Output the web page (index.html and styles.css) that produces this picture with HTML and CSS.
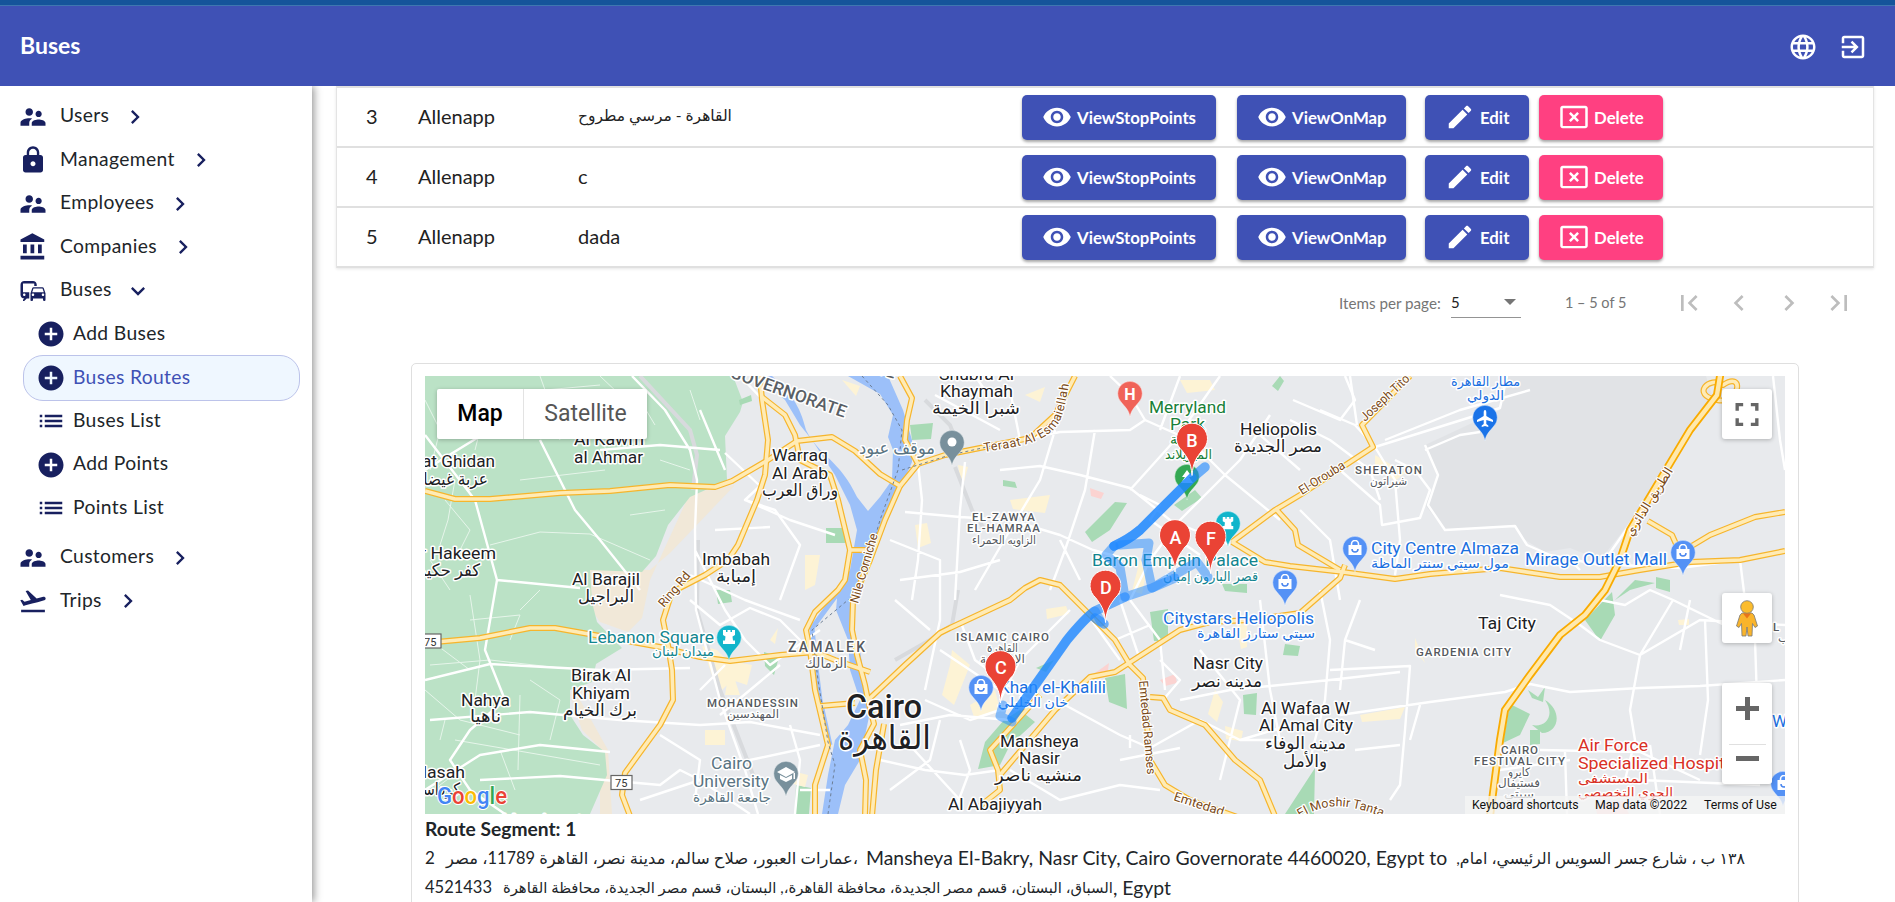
FILE: index.html
```html
<!DOCTYPE html>
<html lang="en">
<head>
<meta charset="utf-8">
<title>Buses</title>
<link rel="stylesheet" href="styles.css">
</head>
<body>
<svg class="sprite" aria-hidden="true">
  <symbol id="i-people" viewBox="0 0 24 24"><path d="M16.5 12c1.38 0 2.49-1.12 2.49-2.5S17.88 7 16.5 7C15.12 7 14 8.12 14 9.5s1.12 2.5 2.5 2.5zM9 11c1.66 0 2.99-1.34 2.99-3S10.66 5 9 5C7.34 5 6 6.34 6 8s1.34 3 3 3zm7.5 3c-1.83 0-5.5.92-5.5 2.75V19h11v-2.25c0-1.83-3.67-2.75-5.5-2.75zM9 13c-2.33 0-7 1.17-7 3.5V19h7v-2.25c0-.85.33-2.34 2.37-3.47C10.5 13.1 9.66 13 9 13z"/></symbol>
  <symbol id="i-lock" viewBox="0 0 24 24"><path d="M18 8h-1V6c0-2.76-2.24-5-5-5S7 3.24 7 6v2H6c-1.1 0-2 .9-2 2v10c0 1.1.9 2 2 2h12c1.1 0 2-.9 2-2V10c0-1.1-.9-2-2-2zm-6 9c-1.1 0-2-.9-2-2s.9-2 2-2 2 .9 2 2-.9 2-2 2zm3.1-9H8.9V6c0-1.71 1.39-3.1 3.1-3.1 1.71 0 3.1 1.39 3.1 3.1v2z"/></symbol>
  <symbol id="i-bank" viewBox="0 0 24 24"><path d="M4 10v7h3v-7H4zm6 0v7h3v-7h-3zM2 22h19v-3H2v3zm14-12v7h3v-7h-3zm-4.500-9L2 6v2h19V6l-9.500-5z"/></symbol>
  <symbol id="i-commute" viewBox="0 0 24 24"><path d="M12 4H5C3.34 4 2 5.34 2 7v8c0 1.66 1.34 3 3 3l-1 1v1h1l2-2.030L9 18v-5H4V5.980L13 6v2h2V7c0-1.660-1.340-3-3-3zM5 14c.55 0 1 .45 1 1s-.45 1-1 1-1-.45-1-1 .45-1 1-1zm15.570-4.340c-.14-.4-.52-.66-.97-.66h-7.190c-.46 0-.83.26-.98.66L10 13.770l.01 5.510c0 .38.31.72.69.72h.62c.38 0 .68-.38.68-.76V18h8v1.240c0 .38.31.76.69.76h.61c.38 0 .69-.34.69-.72l.01-1.370v-4.140l-1.430-4.110zm-8.160.34h7.190l1.030 3h-9.250l1.030-3zM12 16c-.55 0-1-.45-1-1s.45-1 1-1 1 .45 1 1-.45 1-1 1zm8 0c-.55 0-1-.45-1-1s.45-1 1-1 1 .45 1 1-.45 1-1 1z"/></symbol>
  <symbol id="i-takeoff" viewBox="0 0 24 24"><path d="M2.500 19h19v2h-19v-2zm19.570-9.360c-.21-.8-1.040-1.280-1.840-1.060L14.920 10l-6.900-6.430-1.930.51 4.140 7.170-4.970 1.330-1.970-1.540-1.450.39 1.820 3.160.77 1.330 1.600-.43 5.310-1.420 4.350-1.160L21 11.490c.81-.23 1.280-1.050 1.070-1.850z"/></symbol>
  <symbol id="i-add" viewBox="0 0 24 24"><path d="M12 2C6.480 2 2 6.480 2 12s4.480 10 10 10 10-4.480 10-10S17.520 2 12 2zm5 11h-4v4h-2v-4H7v-2h4V7h2v4h4v2z"/></symbol>
  <symbol id="i-list" viewBox="0 0 24 24"><path d="M3 13h2v-2H3v2zm0 4h2v-2H3v2zm0-8h2V7H3v2zm4 4h14v-2H7v2zm0 4h14v-2H7v2zM7 7v2h14V7H7z"/></symbol>
  <symbol id="i-right" viewBox="0 0 24 24"><path d="M10 6L8.590 7.410 13.170 12l-4.580 4.590L10 18l6-6z"/></symbol>
  <symbol id="i-left" viewBox="0 0 24 24"><path d="M15.410 7.410L14 6l-6 6 6 6 1.410-1.410L10.830 12z"/></symbol>
  <symbol id="i-down" viewBox="0 0 24 24"><path d="M16.590 8.590L12 13.170 7.410 8.590 6 10l6 6 6-6z"/></symbol>
  <symbol id="i-first" viewBox="0 0 24 24"><path d="M18.410 16.590L13.820 12l4.590-4.590L17 6l-6 6 6 6zM6 6h2v12H6z"/></symbol>
  <symbol id="i-last" viewBox="0 0 24 24"><path d="M5.590 7.410L10.180 12l-4.590 4.590L7 18l6-6-6-6zM16 6h2v12h-2z"/></symbol>
  <symbol id="i-globe" viewBox="0 0 24 24"><path d="M11.990 2C6.470 2 2 6.480 2 12s4.470 10 9.990 10C17.520 22 22 17.520 22 12S17.520 2 11.990 2zm6.930 6h-2.950c-.32-1.250-.78-2.450-1.380-3.560 1.840.63 3.370 1.910 4.330 3.560zM12 4.040c.83 1.200 1.480 2.530 1.910 3.960h-3.820c.43-1.430 1.080-2.760 1.910-3.960zM4.260 14C4.100 13.360 4 12.690 4 12s.1-1.360.26-2h3.380c-.08.66-.14 1.320-.14 2s.06 1.340.14 2H4.260zm.82 2h2.950c.32 1.250.78 2.450 1.380 3.560-1.840-.63-3.370-1.900-4.330-3.560zm2.950-8H5.080c.96-1.660 2.490-2.930 4.330-3.560C8.810 5.550 8.350 6.750 8.030 8zM12 19.960c-.83-1.200-1.480-2.530-1.910-3.960h3.820c-.43 1.430-1.080 2.760-1.910 3.960zM14.340 14H9.660c-.09-.66-.16-1.320-.16-2s.07-1.350.16-2h4.680c.09.65.16 1.320.16 2s-.07 1.340-.16 2zm.25 5.560c.6-1.110 1.060-2.310 1.380-3.560h2.950c-.96 1.650-2.490 2.930-4.330 3.560zM16.360 14c.08-.66.14-1.320.14-2s-.06-1.340-.14-2h3.380c.16.64.26 1.310.26 2s-.1 1.360-.26 2h-3.380z"/></symbol>
  <symbol id="i-exit" viewBox="0 0 24 24"><path d="M10.090 15.590L11.500 17l5-5-5-5-1.410 1.410L12.670 11H3v2h9.670l-2.580 2.590zM19 3H5c-1.110 0-2 .9-2 2v4h2V5h14v14H5v-4H3v4c0 1.100.89 2 2 2h14c1.100 0 2-.9 2-2V5c0-1.100-.9-2-2-2z"/></symbol>
  <symbol id="i-eye" viewBox="0 0 24 24"><path d="M12 4.500C7 4.500 2.730 7.610 1 12c1.730 4.390 6 7.500 11 7.500s9.270-3.110 11-7.500c-1.730-4.390-6-7.500-11-7.500zM12 17c-2.760 0-5-2.240-5-5s2.240-5 5-5 5 2.240 5 5-2.240 5-5 5zm0-8c-1.660 0-3 1.340-3 3s1.340 3 3 3 3-1.340 3-3-1.340-3-3-3z"/></symbol>
  <symbol id="i-edit" viewBox="0 0 24 24"><path d="M3 17.250V21h3.750L17.810 9.940l-3.750-3.750L3 17.250zM20.710 7.040c.39-.39.39-1.020 0-1.410l-2.340-2.340c-.39-.39-1.020-.39-1.410 0l-1.830 1.830 3.750 3.750 1.830-1.830z"/></symbol>
  <symbol id="i-delete" viewBox="0 0 24 24"><path d="M21 19.100H3V5h18v14.100zM21 3H3c-1.100 0-2 .9-2 2v14c0 1.100.9 2 2 2h18c1.100 0 2-.9 2-2V5c0-1.100-.9-2-2-2z"/><path d="M14.590 8L12 10.590 9.410 8 8 9.410 10.590 12 8 14.590 9.410 16 12 13.410 14.590 16 16 14.590 13.410 12 16 9.410z"/></symbol>
  <symbol id="p-red" viewBox="-16 -54 32 56"><path d="M0 0C-1-14-5-18-10-25A15.500 15.500 0 1 1 10-25C5-18 1-14 0 0z" fill="#ea4335" stroke="#fff" stroke-width="1"/></symbol>
  <symbol id="p-poi" viewBox="-14 -38 28 40"><path d="M0 0C-1-7-5-10-9-15A12.300 12.300 0 1 1 9-15C5-10 1-7 0 0z" stroke="#fff" stroke-opacity=".6" stroke-width=".7"/></symbol>
  <symbol id="g-bag" viewBox="-8 -8 16 16"><path d="M-6.500-3h13V7h-13z" fill="#fff"/><path d="M-3.500-2.500V-4a3.500 3.500 0 0 1 7 0v1.500" fill="none" stroke="#fff" stroke-width="1.600"/><path d="M-3 1a3 3 0 0 0 6 0" fill="none" stroke="#4a86ee" stroke-width="1.500"/></symbol>
  <symbol id="g-tower" viewBox="-8 -8 16 16"><path d="M-6-7h3v2h1.500v-2h3v2H3v-2h3v5L3.500-.5l.5 4H6V7H-6V3.500h2l.5-4L-6-2z" fill="#fff"/></symbol>
</svg>

<div class="topstrip"></div>
<header class="appbar">
  <h1 class="title">Buses</h1>
  <div class="tools"><svg class="ic"><use href="#i-globe"/></svg><svg class="ic"><use href="#i-exit"/></svg></div>
</header>

<div class="body">
  <nav class="side">
    <a class="item"><svg class="ic"><use href="#i-people"/></svg><span>Users</span><svg class="chev"><use href="#i-right"/></svg></a>
    <a class="item"><svg class="ic"><use href="#i-lock"/></svg><span>Management</span><svg class="chev"><use href="#i-right"/></svg></a>
    <a class="item"><svg class="ic"><use href="#i-people"/></svg><span>Employees</span><svg class="chev"><use href="#i-right"/></svg></a>
    <a class="item"><svg class="ic"><use href="#i-bank"/></svg><span>Companies</span><svg class="chev"><use href="#i-right"/></svg></a>
    <a class="item"><svg class="ic"><use href="#i-commute"/></svg><span>Buses</span><svg class="chev"><use href="#i-down"/></svg></a>
    <div class="sub">
      <a class="subitem"><svg class="ic"><use href="#i-add"/></svg><span>Add Buses</span></a>
      <a class="subitem active"><svg class="ic"><use href="#i-add"/></svg><span>Buses Routes</span></a>
      <a class="subitem"><svg class="ic"><use href="#i-list"/></svg><span>Buses List</span></a>
      <a class="subitem"><svg class="ic"><use href="#i-add"/></svg><span>Add Points</span></a>
      <a class="subitem"><svg class="ic"><use href="#i-list"/></svg><span>Points List</span></a>
    </div>
    <a class="item"><svg class="ic"><use href="#i-people"/></svg><span>Customers</span><svg class="chev"><use href="#i-right"/></svg></a>
    <a class="item"><svg class="ic"><use href="#i-takeoff"/></svg><span>Trips</span><svg class="chev"><use href="#i-right"/></svg></a>
  </nav>

  <main class="main">
    <div class="table">
      <div class="row"><span>3</span><span>Allenapp</span><span class="ar-cell">القاهرة - مرسي مطروح</span>
        <div class="acts"><button class="btn b1"><svg class="ic"><use href="#i-eye"/></svg>ViewStopPoints</button><button class="btn b2"><svg class="ic"><use href="#i-eye"/></svg>ViewOnMap</button><button class="btn b3"><svg class="ic"><use href="#i-edit"/></svg>Edit</button><button class="btn b4"><svg class="ic"><use href="#i-delete"/></svg>Delete</button></div></div>
      <div class="row"><span>4</span><span>Allenapp</span><span>c</span>
        <div class="acts"><button class="btn b1"><svg class="ic"><use href="#i-eye"/></svg>ViewStopPoints</button><button class="btn b2"><svg class="ic"><use href="#i-eye"/></svg>ViewOnMap</button><button class="btn b3"><svg class="ic"><use href="#i-edit"/></svg>Edit</button><button class="btn b4"><svg class="ic"><use href="#i-delete"/></svg>Delete</button></div></div>
      <div class="row"><span>5</span><span>Allenapp</span><span>dada</span>
        <div class="acts"><button class="btn b1"><svg class="ic"><use href="#i-eye"/></svg>ViewStopPoints</button><button class="btn b2"><svg class="ic"><use href="#i-eye"/></svg>ViewOnMap</button><button class="btn b3"><svg class="ic"><use href="#i-edit"/></svg>Edit</button><button class="btn b4"><svg class="ic"><use href="#i-delete"/></svg>Delete</button></div></div>
    </div>

    <div class="pager">
      <span class="per">Items per page:</span>
      <span class="select"><span>5</span><i></i></span>
      <span class="range">1 – 5 of 5</span>
      <svg class="pg"><use href="#i-first"/></svg><svg class="pg"><use href="#i-left"/></svg><svg class="pg"><use href="#i-right"/></svg><svg class="pg"><use href="#i-last"/></svg>
    </div>

    <section class="card">
      <div class="map">
        <svg class="canvas" viewBox="425 376 1360 438">
          <defs>
            <g id="major">
              <path d="M425 491L455 499L490 499L560 493L610 491L670 485L715 487L732 481L768 460L797 441L832 437L855 451L880 474L900 486"/>
              <path d="M760 376L762 400L768 440L765 475L757 500L738 545L728 560L705 575L672 592L663 620L668 645L672 670L673 700L660 725L625 773L622 795L630 816"/>
              <path d="M762 397L785 415L795 435L800 460L830 475L838 500L850 550L845 580L838 590L815 612L806 630L810 650L815 690L828 745L815 785L815 816"/>
              <path d="M425 643L480 638L530 628L555 628L600 636L660 647L700 657L730 661L780 655L815 652L835 660L870 672"/>
              <path d="M900 486L885 520L870 560L853 600L852 630L857 655L865 685L868 700L874 724L860 750L866 780L865 816M884 724L876 770L872 816"/>
              <path d="M900 376L912 398L907 420L905 440L918 464L945 455L975 449L1030 438L1055 415L1075 376M918 464L900 486M850 550L870 550M820 706L855 703"/>
              <path d="M868 700L905 665L940 633L950 628L1010 600L1025 588L1040 580L1060 585L1085 610L1115 640L1130 665L1143 678L1150 760L1165 785L1190 800L1240 818"/>
              <path d="M980 806L1000 790L998 770L990 750L1040 695M1000 775L1055 710L1090 677L1115 672L1180 630L1210 622L1250 620L1300 613L1340 578L1345 565"/>
              <path d="M1150 697L1163 698L1170 710L1205 725L1235 760L1260 780L1275 816"/>
              <path d="M1232 542L1275 510L1300 495L1373 447L1362 425L1410 376M1275 508L1295 530L1298 545L1340 570"/>
              <path d="M1232 542L1265 562L1290 566L1343 572L1395 579L1430 574L1500 568L1560 577L1600 577L1640 570L1690 562L1740 560L1785 551"/>
              <path d="M1648 521L1672 535L1680 553L1710 535L1755 517L1785 512M1717 400C1690 395 1710 375 1723 385C1745 370 1740 405 1717 400"/>
            </g>
            <path id="ring" d="M1721 370L1717 395L1690 430L1660 480L1630 530L1620 560L1605 590L1585 615L1560 635L1530 675L1505 710L1500 740L1490 816"/>
            <path id="teraat" d="M984 452C1010 448 1028 445 1040 439C1062 428 1064 415 1070 376"/>
            <path id="moshir" d="M1300 818C1325 803 1345 802 1385 818"/>
          </defs>
          <rect class="land" x="425" y="376" width="1360" height="438"/>
          <path class="beige" d="M735 485L670 553L650 570L590 568L585 600L600 622L628 632L642 618L650 580L690 493zM590 655L570 695L582 730L600 748L600 814L612 814L608 750L580 700z"/>
          <path class="veg" d="M425 376L733 376L743 402L740 412L725 436L727 480L712 487L690 497L668 525L656 556L642 572L590 570L592 602L597 622L622 648L596 664L592 682L570 690L570 715L583 735L605 752L607 775L590 814L425 814z"/>
          <path class="dark" d="M1508 376L1706 376L1712 395L1680 440L1645 500L1620 535L1600 560L1570 548L1545 552L1525 540L1515 525L1445 530L1425 505L1438 475L1425 445L1500 410z"/>
          <path class="water" d="M772 376C790 392 800 405 806 430C818 455 840 460 857 497L868 511L880 497L892 480L893 450L888 437L893 415L880 394L848 376L888 376L903 410L912 440L912 462L905 478L895 500L884 530L868 570L860 592L852 610L853 632L860 650L866 690L870 712L860 760L845 785L838 814L822 814L828 775L835 740L848 725L860 700L850 670L848 640L836 610L838 588L850 570L857 530L850 505L835 475L812 440L800 425L785 400L758 376z"/>
          <path class="thinwater" d="M840 590L812 628L815 660L820 700L830 745"/>
          <g class="park">
            <path d="M739 400l12-5 1 6-12 4zM826 528h19v15h-19zM716 590h14l2 12-14 2zM910 425l23-2-2 16-19 1zM1085 532L1115 502L1127 503L1110 530L1092 542zM1174 505L1195 490L1202 498L1182 511zM1004 720L1020 710L1035 722L1010 745L1000 765L978 769L985 742zM1105 678l20-4 2 35-18-7zM1150 612l18-3 0 32-14 0zM1285 644l15 2-2 10-15-1zM1243 695l14-2-1 22-12-1zM1285 814L1315 768L1314 814zM1222 584l25 0 0 9-22-2zM764 652l15 5-5 18-9-9zM796 785l15 3-2 26-14 0zM1615 600L1635 580L1655 583L1630 590zM1656 577l14 3 0 12-14-4zM1585 620L1612 592L1615 615L1600 641zM1003 480l12 2 2 6-14-2zM1036 668l18-8-8 12zM1510 704L1530 714L1520 735L1503 743zM1528 690l10 7 7-10-2 15-11-4zM1530 730h10v14l-10 1z"/>
            <path d="M1545 700C1562 710 1560 732 1542 733L1532 725C1545 728 1556 716 1545 700zM1272 386l8-10 4 5-6 10z"/>
          </g>
          <g class="blob"><path d="M702 646l15 4 10 10 25 5-5 20-15-5-10 10-10-15zM705 730h20v15h-20zM788 770l20 5-3 12-15-4zM805 555l15 0-5 30-10 5zM770 640l8-12-3 16zM730 665l10 30-15 0zM1235 617l12 0 0 30-6 2zM1225 726l18 5-2 10-15-2zM1360 715l45-8-5 12-38 3zM1415 638l10 25-10-13zM1375 455l30 18-10 8-20-15zM1140 560l8 4-6 30-10-3zM952 650l18 15-16 40-12-10 8-30zM915 525l12-2 4 20-13 5zM1010 500l40-5-5 18-32-4zM970 705l25-15 5 20-25 10zM1046 609l20-3 3 8-22 5zM1025 395l20-8-5 15zM1180 380l30 0 5 10-28 3zM1678 620l11-1 0 6-10 0zM1215 690l8 12-6 20-9-8zM958 465l10 2-6 22zM842 380l18 6-4 10z"/></g>
          <g class="hosp"><path d="M1090 488l14 5-3 6-10-3zM1095 673l14-10-2 14zM1160 680l15-6 2 9-12 3zM1595 805l28-4 6 13-32 0z"/></g>
          <g class="rail"><path d="M925 400L950 425L958 445M955 467L972 510L985 530M698 540L697 610L720 690L755 780M640 376L690 430L697 455L693 490M958 590L952 625L930 640L895 660"/></g>
          <g class="field">
            <path d="M455 740L600 765M450 400L500 430M440 420L510 400M520 480L605 470M540 400L560 440M600 376L620 395M640 400L655 425M490 545L540 532L590 534L650 560M425 690L460 720L520 735M470 595L480 660L475 700M430 640L470 670M500 750L515 790M460 770L420 800M520 695L518 770M600 440L610 455M580 400L585 415M430 560L450 590M445 500L470 530L460 550M540 376L545 390L600 385M430 665L490 660L560 668M445 720L440 740M480 430L475 450M540 590L520 610M630 515L665 510M470 620L520 615L510 640M690 390L700 420M660 460L690 470M425 400L440 430L430 470M530 680L560 700L550 740M455 480L448 520L440 545"/>
          </g>
          <g class="minor">
            <path d="M632 376L665 410L690 450L697 480L695 530L696 610L720 700L745 770L758 814M425 435L475 500L497 580L485 650L505 700M540 440L575 510L600 540L640 590M497 580L580 588M425 680L490 664L600 670L690 668M425 790L480 755L540 745L610 752M505 700L470 730L450 760L470 790L505 814M480 780L560 776L660 785L680 770L710 785M430 720L530 712L620 720L700 725L750 722L820 735M490 430L425 470M600 450L660 445L720 450M740 376L765 402M725 453L760 486M760 486L745 500L775 510L800 545L780 600M745 500L790 520L835 535M715 530L770 527M695 550L725 610L745 640M690 575L745 600L800 620M690 600L720 625L750 608L780 620L810 650M745 640L770 665L820 630M700 690L725 665M720 715L780 665M750 760L820 745M660 735L700 760L695 800M640 800L700 780L750 814M790 725L800 760L795 814M800 790L830 790M700 410L725 470"/>
            <path d="M918 464L922 500L918 560L912 600M905 512L960 517L1010 520L1060 535L1093 550L1130 560M965 462L960 510L955 600M1010 390L1020 440L1060 432L1130 430L1145 420L1130 395L1110 376M1055 430L1040 480L1010 530L975 590M1000 470L1040 466L1080 475L1130 488L1170 520L1230 545M1095 430L1085 490L1065 550L1050 590M1145 420L1190 440L1225 475L1280 520M1180 376L1160 430M1220 376L1175 440L1130 490M1140 495L1160 505L1150 520L1200 555M1225 475L1180 520L1150 560L1130 600M1260 435L1300 470M1270 415L1240 460L1180 520M1293 400L1340 420L1355 400L1345 376M1290 420L1330 440L1370 470L1380 500M935 395L1000 430M975 376L985 390M890 540L940 560L940 620L925 690M895 600L930 630M900 580L960 572L1000 560M1060 540L1080 580M1070 610L1020 660L1000 700M940 650L1000 690M960 620L975 660L1035 705M925 700L970 720L1000 710M1010 720L950 715L900 725M880 760L925 770L965 775L1000 770M905 740L960 800M890 790L930 760L940 720M955 810L970 770L960 740M1010 770L1060 800L1120 785L1160 790M1065 705L1120 735L1150 748L1200 720L1240 740L1290 725M1130 748L1130 735M1160 660L1180 680L1163 700M1130 600L1160 640L1165 690M1090 618L1120 660M1115 640L1150 625M1120 600L1140 660M1260 600L1270 690L1280 740L1240 740M1180 700L1230 690L1330 680L1400 672M1200 650L1240 700L1220 780M1320 590L1330 640L1325 700L1310 760M1360 600L1345 640L1340 690M1300 510L1330 540L1340 600M1345 640L1375 650M1330 670L1410 666L1405 730L1400 785L1390 800M1340 715L1430 702L1505 692L1530 684L1570 692L1640 688L1700 686L1785 680M1355 750L1400 745M1120 760L1180 748"/>
            <path d="M1425 445L1438 475L1428 505L1445 530L1515 526L1527 545L1550 555L1600 565M1320 410L1355 425L1375 447L1500 408L1507 376M1340 470L1380 505L1382 525L1420 518L1430 490L1415 470L1395 460M1375 447L1395 480L1400 540L1395 575M1385 440L1460 410L1530 390M1350 376L1357 425M1425 450L1460 435L1480 432M1500 595L1550 605L1580 625L1600 640L1640 655L1700 620L1785 625M1640 655L1630 710L1635 740L1625 780M1705 620L1708 700L1700 755M1673 600L1640 655M1673 600L1755 640L1757 700M1773 376L1780 440L1785 470M1605 560L1640 510M1620 565L1680 568L1740 560L1745 600M1580 570L1570 560M1690 600L1680 650M1600 600L1625 605L1650 590L1673 600M1540 750L1640 752L1700 780M1565 752L1567 814M1500 770L1570 760M1640 780L1760 785M1650 745L1660 814M1420 705L1410 740"/>
          </g>
          <g class="major-out"><use href="#major"/></g><g class="major-in"><use href="#major"/></g>
          <g class="ring-out"><use href="#ring"/></g><g class="ring-in"><use href="#ring"/></g>
          <path class="ferry" d="M862 376L888 405L902 430L898 470L880 520L860 590L812 630L818 680L828 742L835 765L828 814M902 470L950 455L1010 442"/>

          <g class="lbl town">
            <text x="939" y="380" textLength="75">Shubra Al</text><text x="940" y="397" textLength="73">Khaymah</text><text x="932" y="414" textLength="88">شبرا الخيمة</text>
            <text x="574" y="445" textLength="70">Al Kawm</text><text x="574" y="463" textLength="69">al Ahmar</text>
            <text x="422" y="467" textLength="73">at Ghidan</text><text x="412" y="485" textLength="76">عزبة غيضان</text>
            <text x="772" y="461" textLength="56">Warraq</text><text x="772" y="479" textLength="56">Al Arab</text><text x="762" y="496" textLength="76">وراق العرب</text>
            <text x="420" y="559" textLength="76">r Hakeem</text><text x="416" y="576" textLength="64">كفر حكيم</text>
            <text x="572" y="585" textLength="68">Al Barajil</text><text x="578" y="602" textLength="56">البراجيل</text>
            <text x="702" y="565" textLength="68">Imbabah</text><text x="716" y="582" textLength="40">إمبابة</text>
            <text x="571" y="681" textLength="60">Birak Al</text><text x="572" y="699" textLength="58">Khiyam</text><text x="563" y="716" textLength="74">برك الخيام</text>
            <text x="461" y="706" textLength="49">Nahya</text><text x="470" y="722" textLength="31">ناهيا</text>
            <text x="417" y="778" textLength="48">dasah</text><text x="415" y="795" textLength="45">كرداسة</text>
            <text x="502" y="826" textLength="80">Mansheyat</text>
            <text x="1240" y="435" textLength="77">Heliopolis</text><text x="1234" y="452" textLength="88">مصر الجديدة</text>
            <text x="1193" y="669" textLength="70">Nasr City</text><text x="1192" y="687" textLength="70">مدينه نصر</text>
            <text x="1261" y="714" textLength="89">Al Wafaa W</text><text x="1259" y="731" textLength="94">Al Amal City</text><text x="1265" y="749" textLength="81">مدينه الوفاء</text><text x="1283" y="767" textLength="44">والأمل</text>
            <text x="1000" y="747" textLength="79">Mansheya</text><text x="1019" y="764" textLength="41">Nasir</text><text x="995" y="781" textLength="87">منشيه ناصر</text>
            <text x="948" y="810" textLength="94">Al Abajiyyah</text><text x="1478" y="629" textLength="58">Taj City</text>
          </g>
          <g class="lbl city"><text x="846" y="718" textLength="76">Cairo</text><text x="838" y="749" textLength="93">القاهرة</text></g>
          <g class="lbl dist">
            <text x="972" y="521" textLength="63">EL-ZAWYA</text><text x="967" y="532" textLength="73">EL-HAMRAA</text><text x="972" y="544" textLength="64">الزاويه الحمراء</text>
            <text x="707" y="707" textLength="91">MOHANDESSIN</text><text x="727" y="718" textLength="52">المهندسين</text>
            <text class="zam" x="788" y="652" textLength="77">ZAMALEK</text><text class="zam2" x="805" y="668" textLength="42">الزمالك</text>
            <text x="956" y="641" textLength="93">ISLAMIC CAIRO</text><text x="987" y="652" textLength="31">القاهرة</text><text x="980" y="663" textLength="45">الإسلامية</text>
            <text x="1355" y="474" textLength="67">SHERATON</text><text x="1370" y="485" textLength="37">شيراتون</text>
            <text x="1416" y="656" textLength="95">GARDENIA CITY</text>
            <text x="1501" y="754" textLength="37">CAIRO</text><text x="1474" y="765" textLength="91">FESTIVAL CITY</text><text x="1508" y="776" textLength="22">كايرو</text><text x="1498" y="787" textLength="42">فستيفال</text><text x="1504" y="798" textLength="30">سيتي</text>
            <text x="1773" y="631">L</text><text x="1778" y="642">ب</text>
          </g>
          <g class="lbl gov"><text transform="translate(729 377) rotate(19.500)" textLength="122">GOVERNORATE</text><text transform="translate(867 371) rotate(16)" textLength="28">ATE</text></g>
          <g class="lbl road">
            <text transform="translate(664 608) rotate(-50)" textLength="42">Ring Rd</text>
            <text transform="translate(858 604) rotate(-74)" textLength="72">Nile Corniche</text>
            <text class="wide"><textPath href="#teraat">Teraat Al Esmaiellah</textPath></text>
            <text transform="translate(1302 495) rotate(-32)" textLength="52">El-Orouba</text>
            <text transform="translate(1365 422) rotate(-43)" textLength="62">Joseph Tito</text>
            <text transform="translate(1139 681) rotate(85)" textLength="94">Emtedad Ramses</text>
            <text transform="translate(1173 800) rotate(18)" textLength="52">Emtedad</text>
            <text><textPath href="#moshir">El Moshir Tantawi</textPath></text>
            <text transform="translate(1632 537) rotate(-58)" textLength="78">الطريق الدائري</text>
          </g>
          <g class="lbl slate"><text x="859" y="454" textLength="76">موقف عبود</text><text x="711" y="769" textLength="41">Cairo</text><text x="693" y="787" textLength="76">University</text><text class="sm" x="693" y="802" textLength="78">جامعة القاهرة</text></g>
          <g class="lbl teal"><text x="588" y="643" textLength="126">Lebanon Square</text><text class="sm" x="652" y="656" textLength="62">ميدان لبنان</text><text x="1092" y="566" textLength="166">Baron Empain Palace</text><text class="sm" x="1163" y="581" textLength="95">قصر البارون إمبان</text></g>
          <g class="lbl green"><text x="1149" y="413" textLength="77">Merryland</text><text x="1170" y="430" textLength="35">Park</text><text class="sm" x="1170" y="444" textLength="35">حديقة</text><text class="sm" x="1165" y="459" textLength="47">الميريلاند</text></g>
          <g class="lbl blue"><text x="1163" y="624" textLength="151">Citystars Heliopolis</text><text class="sm" x="1197" y="638" textLength="118">سيتي ستارز القاهرة</text><text x="999" y="693" textLength="107">Khan el-Khalili</text><text class="sm" x="998" y="707" textLength="70">خان الخليلي</text><text x="1371" y="554" textLength="148">City Centre Almaza</text><text class="sm" x="1371" y="568" textLength="138">مول سيتي سنتر الماظة</text><text x="1525" y="565" textLength="142">Mirage Outlet Mall</text><text class="sm" x="1451" y="386" textLength="69">مطار القاهرة</text><text class="sm" x="1467" y="400" textLength="37">الدولي</text><text x="1772" y="727">W</text></g>
          <g class="lbl red"><text x="1578" y="751" textLength="70">Air Force</text><text x="1578" y="769" textLength="161">Specialized Hospital</text><text class="sm" x="1578" y="783" textLength="70">المستشفى</text><text class="sm" x="1578" y="797" textLength="95">الجوي التخصصي</text></g>
          <g class="shield"><rect x="420" y="634" width="21" height="14"/><text x="424" y="646">75</text><rect x="611" y="775.500" width="21" height="14"/><text x="615" y="787">75</text></g>

          <g class="pois">
            <use href="#p-poi" x="938" y="428" width="28" height="40" fill="#78909c"/><circle cx="952" cy="442" r="4.500" fill="#fff"/>
            <use href="#p-poi" x="772" y="759" width="28" height="40" fill="#78909c"/><path d="M777 772l9-5 9 5-9 5zM780 775v4l6 3 6-3v-4l-6 3zM793.500 773h1.500v6h-1.500z" fill="#fff"/>
            <use href="#p-poi" x="1116" y="379" width="28" height="40" fill="#f06359"/><text class="h" x="1130" y="400">H</text>
            <use href="#p-poi" x="1173" y="462" width="28" height="40" fill="#34a853"/><path d="M1187 470l5 7h-3l4 6h-12l4-6h-3z" fill="#fff"/>
            <use href="#p-poi" x="1214" y="509" width="28" height="40" fill="#12b5cb"/><use href="#g-tower" x="1221" y="516" width="14" height="14"/>
            <use href="#p-poi" x="715" y="623" width="28" height="40" fill="#12b5cb"/><use href="#g-tower" x="721" y="629" width="16" height="16"/>
            <use href="#p-poi" x="1271" y="568" width="28" height="40" fill="#5491f5"/><use href="#g-bag" x="1277" y="574" width="16" height="16"/>
            <use href="#p-poi" x="967" y="673" width="28" height="40" fill="#5491f5"/><use href="#g-bag" x="973" y="679" width="16" height="16"/>
            <use href="#p-poi" x="1341" y="534" width="28" height="40" fill="#5491f5"/><use href="#g-bag" x="1347" y="540" width="16" height="16"/>
            <use href="#p-poi" x="1669" y="538" width="28" height="40" fill="#5491f5"/><use href="#g-bag" x="1675" y="544" width="16" height="16"/>
            <use href="#p-poi" x="1769" y="769" width="28" height="40" fill="#5491f5"/><use href="#g-bag" x="1776" y="775" width="16" height="16"/>
            <use href="#p-poi" x="1471" y="403" width="28" height="40" fill="#1a73e8"/><path d="M1485 410q1.300 0 1.300 2v4l6.700 4v2l-6.700-2v4l2 1.500v1.500l-3.300-1-3.300 1v-1.500l2-1.500v-4l-6.700 2v-2l6.700-4v-4q0-2 1.300-2z" fill="#fff"/>
          </g>
          <g class="route">
            <path d="M1205 467L1192 478L1140 530Q1128 540 1114 546"/><path d="M1192 478L1140 530Q1128 540 1114 546"/>
            <path class="soft" d="M1120 545L1149 543L1146 560L1152 588L1197 562L1208 577"/>
            <path class="soft" d="M1114 546L1106 555L1120 567L1125 597L1152 588L1175 578"/>
            <path d="M1125 597L1095 611Q1085 618 1067 640L1012 718"/><path class="soft" d="M1101 622L1095 611Q1085 618 1067 640L1012 718"/>
            <path class="soft" d="M1012 722L1000 716L1003 705"/>
            <path d="M1095 618L1104 624"/>
          </g>
          <g class="markers">
            <use href="#p-red" x="1176" y="421.500" width="32" height="56"/><use href="#p-red" x="1159" y="518" width="32" height="56"/><use href="#p-red" x="1194.500" y="519.500" width="32" height="56"/><use href="#p-red" x="1089.500" y="568.500" width="32" height="56"/><use href="#p-red" x="984.500" y="649" width="32" height="56"/>
            <text x="1192" y="447">B</text><text x="1175.500" y="543.500">A</text><text x="1211" y="545">F</text><text x="1106" y="594">D</text><text x="1001" y="674">C</text>
          </g>
          <g class="google"><text x="437" y="804" textLength="70"><tspan fill="#4285f4">G</tspan><tspan fill="#ea4335">o</tspan><tspan fill="#fbbc04">o</tspan><tspan fill="#4285f4">g</tspan><tspan fill="#34a853">l</tspan><tspan fill="#ea4335">e</tspan></text></g>
        </svg>
        <div class="types"><span class="on">Map</span><span>Satellite</span></div>
        <div class="ctl full"><svg viewBox="0 0 24 24"><path d="M0 0h8v3.500H3.500V8H0zM16 0h8v8h-3.500V3.500H16zM0 16h3.500v4.500H8V24H0zM20.500 16H24v8h-8v-3.500h4.500z"/></svg></div>
        <div class="ctl peg"><svg viewBox="0 0 22 37"><path d="M6 13h10l2 2 3.500 11-2.500 1.500-2.500-4L16 36h-4l-1-9-1 9H6l-.5-12.500-2.500 4L.5 26 4 15z" fill="#f9b42b" stroke="#777" stroke-width=".8"/><circle cx="11" cy="7" r="6.300" fill="#fbbc2d" stroke="#777" stroke-width=".8"/><path d="M7 13.500h8l-4 5z" fill="#e8751a"/></svg></div>
        <div class="ctl zoom"><i class="plus"></i><hr><i class="minus"></i></div>
        <div class="legal"><span class="l1">Keyboard shortcuts</span><span class="l2">Map data ©2022</span><span class="l3">Terms of Use</span></div>
      </div>
      <div class="seg"><b>Route Segment: 1</b></div>
      <div class="addr"><span class="n2">2</span><bdi class="a1" dir="rtl">،عمارات العبور، صلاح سالم، مدينة نصر، القاهرة 11789، مصر</bdi><span class="en1">Mansheya El-Bakry, Nasr City, Cairo Governorate 4460020, Egypt to</span><bdi class="a2" dir="rtl">١٣٨ ب ، شارع جسر السويس الرئيسي، امام,</bdi></div>
      <div class="addr"><span class="n4">4521433</span><bdi class="a3" dir="rtl">السباق، البستان، قسم مصر الجديدة، محافظة القاهرة،, البستان، قسم مصر الجديدة، محافظة القاهرة</bdi><span>, Egypt</span></div>
    </section>
  </main>
</div>
<script src="map.js"></script>
</body>
</html>
```
FILE: map.js
```js
// Labels are fitted to their measured width by scaling glyphs, which keeps Arabic letters joined.
document.querySelectorAll('.canvas text[textLength]').forEach(function (t) {
  if (!t.closest('.dist') || /[\u0600-\u06ff]/.test(t.textContent)) {
    t.setAttribute('lengthAdjust', 'spacingAndGlyphs');
  }
});
```
FILE: styles.css
```css
* { box-sizing: border-box; }
body { margin: 0; height: 902px; overflow: hidden; background: #fff; font-family: Lato, "DejaVu Sans", sans-serif; color: #212529; display: flex; flex-direction: column; }
.sprite { display: none; }
.ic { width: 30px; height: 30px; fill: currentColor; flex: none; display: block; }
.topstrip { height: 6px; background: #15549a; border-bottom: 1px solid #3f76b0; flex: none; }
.appbar { height: 80px; flex: none; background: #3f51b5; color: #fff; display: flex; align-items: center; justify-content: space-between; padding: 0 27px 0 20px; }
.title { margin: 0; padding-bottom: 2px; font-size: 23px; font-weight: 700; }
.tools { display: flex; gap: 20px; padding-top: 2px; }
.body { flex: 1; display: flex; min-height: 0; }

.side { width: 312px; flex: none; padding-top: 9px; box-shadow: 2px 0 8px rgba(0,0,0,.42); clip-path: inset(0 -14px 0 0); font-size: 19.300px; letter-spacing: .35px; }
.item { height: 43.500px; display: flex; align-items: center; padding-left: 18px; }
.item .ic, .subitem .ic { color: #18205f; }
.item span { margin-left: 12px; line-height: 24px; padding-bottom: 3px; }
.chev { width: 28px; height: 28px; fill: #18205f; margin-left: 12px; }
.sub { padding-bottom: 6px; }
.subitem { height: 43.500px; display: flex; align-items: center; margin: 0 12px 0 23px; padding-left: 13px; }
.subitem span { margin-left: 7px; line-height: 24px; padding-bottom: 3px; }
.subitem.active { height: 46px; margin-top: -1px; margin-bottom: -1.500px; padding-left: 12px; background: #eff7ff; border: 1px solid #bcc3ea; border-radius: 20px; color: #3f51b5; }

.main { flex: 1; padding: 0 21px 0 24px; min-width: 0; }
.table { border: 1px solid #e4e4e4; border-top: 2px solid #e0e0e0; border-bottom: 0; box-shadow: 0 1px 3px rgba(0,0,0,.1); font-size: 20px; color: #222; }
.row { height: 60px; border-bottom: 2px solid #e0e0e0; display: grid; grid-template-columns: 52px 160px 444px 1fr; align-items: center; padding-left: 29px; }
.row > span { padding-bottom: 3px; }
.row > .ar-cell { font-size: 15.500px; }
.acts { display: flex; }
.btn { height: 45px; border: 0; border-radius: 5px; background: #3f51b5; color: #fff; font: bold 16.800px Lato, sans-serif; display: flex; align-items: center; gap: 5px; padding: 0 0 0 20px; box-shadow: 0 2px 3px rgba(0,0,0,.35); white-space: nowrap; }
.b1 { width: 194px; margin-right: 21px; } .b2 { width: 169px; margin-right: 19px; } .b3 { width: 104px; margin-right: 10px; } .b4 { width: 124px; background: #ff4081; }

.pager { height: 71px; display: flex; align-items: center; padding: 0 0 2px 1003px; font-size: 15.200px; color: #757575; }
.per { width: 112px; flex: none; }
.select { width: 70px; height: 30px; border-bottom: 1px solid #949494; color: #222; display: flex; align-items: center; justify-content: space-between; padding-right: 5px; font-size: 15px; }
.select i { border: 6.500px solid transparent; border-top-color: #757575; border-bottom: 0; }
.range { width: 108px; margin-left: 44px; font-size: 14.500px; }
.pg { width: 32px; height: 32px; fill: #bdbdbd; margin-right: 18px; flex: none; }
.pg:last-child { margin-right: 0; }

.card { margin: 24px 75px 0 75px; height: 620px; border: 1px solid #dfdfdf; border-radius: 5px; padding: 12px 13px; }
.map { position: relative; height: 438px; width: 1360px; overflow: hidden; }
.canvas { display: block; width: 1360px; height: 438px; font-family: Roboto, "DejaVu Sans", sans-serif; }
.land { fill: #e8eaed; } .veg { fill: #bbe2c6; } .beige { fill: #f1e8d8; } .dark { fill: #e1e3e6; } .water { fill: #9cc0f9; }
.thinwater { fill: none; stroke: #9cc0f9; stroke-width: 5; }
.park { fill: #a8dab5; } .blob { fill: #fdf3d5; } .hosp { fill: #fbd3d1; }
.rail { fill: none; stroke: #d8dadd; stroke-width: 4; }
.field { fill: none; stroke: #e6f5ea; stroke-width: 1; }
.minor { fill: none; stroke: #fff; stroke-width: 2.400; stroke-linejoin: round; }
.major-out { fill: none; stroke: #f6b52c; stroke-width: 6; stroke-linejoin: round; }
.major-in { fill: none; stroke: #ffebb5; stroke-width: 3.600; stroke-linejoin: round; }
.ring-out { fill: none; stroke: #f9ab00; stroke-width: 8; }
.ring-in { fill: none; stroke: #ffe9ad; stroke-width: 4.400; }
.ferry { fill: none; stroke: #6d7f96; stroke-width: 1; stroke-dasharray: 3 3; }
.lbl { font-size: 17px; paint-order: stroke; stroke: #fff; stroke-width: 3px; stroke-linejoin: round; }
.town { fill: #202124; }
.city { fill: #202124; font-size: 33px; font-weight: 500; }
.dist { fill: #55595e; font-size: 11.500px; font-weight: 500; }
.dist .zam { font-size: 14px; } .dist .zam2 { font-size: 14px; }
.gov { fill: #5a5f66; font-size: 17px; font-weight: 500; }
.road { fill: #7a4a17; font-size: 12.500px; stroke-width: 2.500px; }
.road .wide { letter-spacing: .5px; }
.slate { fill: #5a7482; } .teal { fill: #12858f; } .green { fill: #188038; } .blue { fill: #1a6fe0; } .red { fill: #d93025; }
.lbl .sm { font-size: 13px; }
.shield rect { fill: #fff; stroke: #666; stroke-width: 1.200; } .shield text { font-size: 11px; fill: #333; }
.h { font-size: 16px; font-weight: 700; fill: #fff; text-anchor: middle; }
.route { fill: none; stroke: #1e88ff; stroke-opacity: .62; stroke-width: 9.500; stroke-linecap: round; stroke-linejoin: round; }
.route .soft { stroke-opacity: .5; stroke-width: 9; }
.markers text { font-size: 18px; font-weight: 500; fill: #fff; text-anchor: middle; }
.google { font-size: 23px; font-weight: 500; paint-order: stroke; stroke: #fff; stroke-width: 2px; }
.types { position: absolute; left: 12px; top: 13px; height: 50px; display: flex; background: #fff; border-radius: 2px; box-shadow: 0 1px 4px rgba(0,0,0,.25); font: 23px/50px Roboto, sans-serif; color: #565656; }
.types span { width: 123px; text-align: center; }
.types .on { width: 87px; color: #000; font-weight: 500; border-right: 1px solid #e3e3e3; }
.ctl { position: absolute; left: 1297px; width: 50px; height: 50px; background: #fff; border-radius: 3px; box-shadow: 0 1px 4px rgba(0,0,0,.25); display: flex; flex-direction: column; align-items: center; justify-content: center; }
.full { top: 13px; } .full svg { width: 24px; height: 23px; fill: #666; }
.peg { top: 217px; } .peg svg { width: 22px; height: 37px; }
.zoom { top: 307px; height: 101px; justify-content: space-between; padding: 0 0 23px; }
.zoom hr { width: 37px; height: 1px; border: 0; margin: 0; background: #e0e0e0; }
.minus { width: 23px; height: 5px; background: #666; display: block; }
.plus { width: 23px; height: 50px; display: block; background: linear-gradient(#666, #666) center/23px 5px no-repeat, linear-gradient(#666, #666) center/5px 23px no-repeat; }
.legal { position: absolute; right: 0; bottom: 0; height: 18px; display: flex; background: rgba(245,245,245,.78); font: 12.300px/19px Roboto, sans-serif; color: #111; white-space: nowrap; }
.l1 { width: 123px; padding-left: 7px; } .l2 { width: 109px; padding-left: 7px; } .l3 { width: 88px; padding-left: 7px; }
.seg { height: 29px; line-height: 29px; font-size: 19.200px; }
.addr { height: 30px; line-height: 29px; font-size: 19.400px; display: flex; white-space: nowrap; }
.n2 { width: 17px; font-size: 17px; } .a1 { width: 416px; font-size: 16.400px; } .en1 { width: 582px; margin: 0 7px 0 8px; } .a2 { width: 290px; font-size: 15.850px; }
.n4 { width: 73px; font-size: 16.500px; } .a3 { width: 615px; font-size: 14.850px; }
```
